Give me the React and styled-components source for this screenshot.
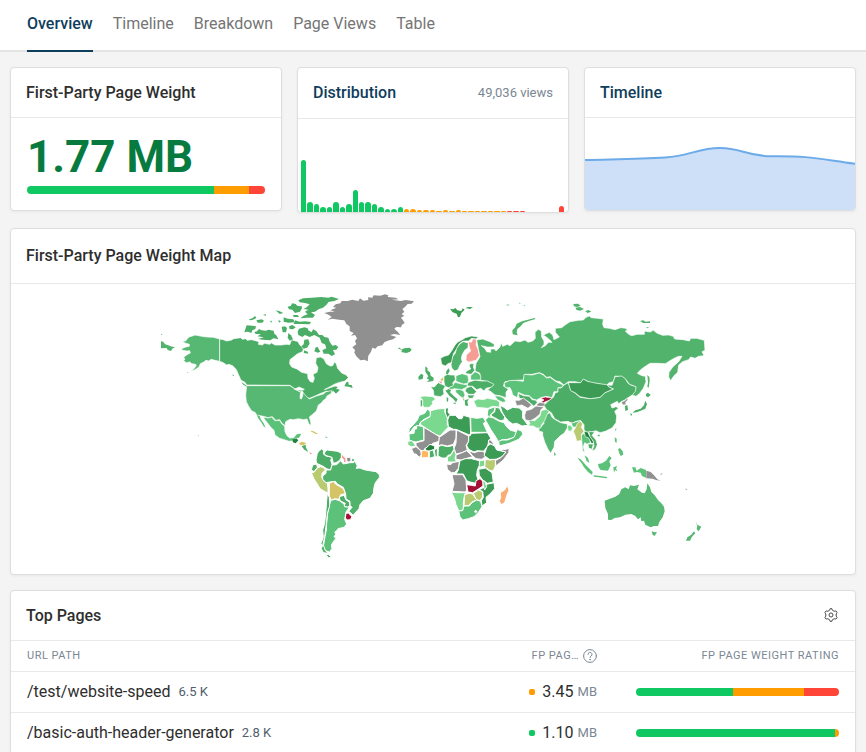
import React from "react";
import styled, { createGlobalStyle } from "styled-components";

const GlobalStyle = createGlobalStyle`
  * {
    box-sizing: border-box;
  }
  body {
    margin: 0;
    background: #f4f4f4;
    color: #2e2e2e;
    font-family: Roboto, "Liberation Sans", sans-serif;
    font-size: 16px;
  }
`;

const ratingColors = {
  good: "#10c862",
  ok: "#ff9d00",
  bad: "#ff4538",
};

const Nav = styled.nav`
  display: flex;
  gap: 20px;
  height: 52px;
  padding: 0 27px;
  background: #fff;
  border-bottom: 2px solid #e3e3e3;
`;

const Tab = styled.a`
  height: 52px;
  line-height: 48px;
  text-decoration: none;
  color: ${(props) => (props.$active ? "#0f3d5c" : "#757575")};
  font-weight: ${(props) => (props.$active ? 500 : 400)};
  border-bottom: 2px solid ${(props) => (props.$active ? "#0f3d5c" : "transparent")};
`;

const Page = styled.main`
  display: grid;
  gap: 15px;
  padding: 15px 10px;
`;

const CardRow = styled.div`
  display: grid;
  grid-template-columns: repeat(3, 1fr);
  align-items: start;
  gap: 15px;
`;

const Card = styled.section`
  overflow: hidden;
  background: #fff;
  border: 1px solid #dedede;
  border-radius: 4px;
  box-shadow: 0 1px 3px rgba(0, 0, 0, 0.05);
`;

const CardHeader = styled.header`
  display: flex;
  align-items: center;
  justify-content: space-between;
  height: ${(props) => props.$height || 50}px;
  padding: 0 15px 1px;
  border-bottom: 1px solid #e8e8e8;
`;

const CardTitle = styled.h2`
  margin: 0;
  font-size: 16px;
  font-weight: 500;
  line-height: 19px;
  color: ${(props) => (props.$link ? "#0f3d5c" : "#2e2e2e")};
`;

const Views = styled.span`
  font-size: 13px;
  color: #7b8794;
`;

const Score = styled.div`
  padding: 13px 16px 16px;
`;

const ScoreValue = styled.div`
  height: 52px;
  line-height: 52px;
  margin-bottom: 3px;
  font-size: 44px;
  font-weight: 700;
  color: #077b3f;
`;

const Bar = styled.div`
  display: flex;
  height: 8px;
  overflow: hidden;
  border-radius: 4px;
`;

const BarPart = styled.div`
  flex: ${(props) => props.$share} 0 0;
  background: ${(props) => ratingColors[props.$rating]};
`;

const Histogram = styled.div`
  display: flex;
  align-items: flex-end;
  gap: 1px;
  height: 93px;
  padding: 0 4px 0 3px;
`;

const HistogramBar = styled.div`
  flex: 1;
  background: ${(props) => ratingColors[props.$rating]};
  border-radius: 3px 3px 0 0;
`;

const Area = styled.svg`
  display: block;
  width: 100%;
  height: 92px;
`;

const MapBody = styled.div`
  padding: 1px 16px 9px;
`;

const MapSvg = styled.svg`
  display: block;
  width: 100%;
  max-width: 556px;
  margin: 0 auto;
  stroke: #fff;
  stroke-linejoin: round;
`;

const IconButton = styled.button`
  display: flex;
  padding: 0;
  margin-right: 2px;
  border: 0;
  background: none;
  color: #4a4a4a;
`;

const Table = styled.table`
  width: 100%;
  table-layout: fixed;
  border-collapse: collapse;
`;

const Th = styled.th`
  width: ${(props) => (props.$width ? props.$width + "px" : "auto")};
  height: 30px;
  padding: 0 16px;
  border-bottom: 1px solid #e8e8e8;
  font-size: 11px;
  font-weight: 400;
  letter-spacing: 0.5px;
  text-align: ${(props) => props.$align || "left"};
  white-space: nowrap;
  color: #7b8794;
`;

const ThInner = styled.div`
  display: flex;
  align-items: center;
  justify-content: flex-end;
  gap: 4px;
`;

const Td = styled.td`
  height: 41px;
  padding: ${(props) => (props.$wide ? "0 16px 0 23px" : "0 16px")};
  border-bottom: 1px solid #e8e8e8;
  white-space: nowrap;
`;

const PathCell = styled.div`
  display: flex;
  align-items: center;
  gap: 8px;
`;

const Path = styled.a`
  color: inherit;
  text-decoration: none;
`;

const Count = styled.span`
  font-size: 13px;
  color: #52606d;
`;

const Weight = styled.div`
  display: flex;
  align-items: center;
  justify-content: flex-end;
`;

const Dot = styled.span`
  flex: none;
  width: 6px;
  height: 6px;
  margin-right: 7px;
  border-radius: 2px;
  background: ${(props) => ratingColors[props.$rating]};
`;

const Unit = styled.span`
  margin-left: 4px;
  font-size: 13px;
  color: #7b8794;
`;

const tabs = ["Overview", "Timeline", "Breakdown", "Page Views", "Table"];

const histogram = [
  52, 10, 8, 5, 5, 10, 5, 8, 22, 10, 10, 8, 5, 3, 3, 5, 3, 3, 2, 2, 2, 1, 2, 1,
  2, 1, 1, 1, 1, 1, 1, 1, 1, 1, 1, 0, 0, 0, 0, 0, 6,
];

const pages = [
  { path: "/test/website-speed", count: "6.5 K", rating: "ok", weight: "3.45", split: [97, 71, 35] },
  { path: "/basic-auth-header-generator", count: "2.8 K", rating: "good", weight: "1.10", split: [199, 4, 0] },
];

const gray = "#909090";
const canada = "#4cae66";
const usa = "#56b872";
const russia = "#52b36c";
const mid = "#5cc279";
const light = "#7bd88f";
const dark = "#3c9c55";
const deep = "#23813d";
const olive = "#b8cb71";
const mustard = "#d4c465";
const crimson = "#a31234";
const pink = "#f59c94";
const orange = "#fdb75c";

// every region has its own origin, shapes are [color, points]
// border is the width of the white line between countries
const regions = [
  {
    name: "North America",
    x: 0,
    y: 0,
    border: 2,
    shapes: [
      [usa, "194,162 175,157 155,156 140,154 120,150 112,153 104,155 98,160 92,168 82,169 90,174 103,178 103,184 92,186 78,192 84,196 96,198 104,197 106,204 96,209 86,217 90,222 86,227 94,233 105,231 110,236 122,238 124,242 116,252 106,259 120,254 132,246 136,236 148,230 152,226 162,228 168,223 180,226 194,229"],
      [canada, "194,162 205,164 215,168 230,165 236,161 257,158 262,163 272,161 276,166 290,164 312,170 310,178 322,180 328,175 345,178 348,173 360,180 378,180 395,178 404,179 410,164 420,168 426,178 432,174 431,184 438,182 445,192 443,200 428,206 418,214 405,224 404,236 410,246 426,252 440,262 458,266 459,280 466,290 474,292 478,280 474,268 486,262 489,248 482,235 484,218 497,216 507,222 514,236 525,243 533,242 538,232 543,234 548,250 560,264 574,270 580,278 570,288 550,293 538,298 525,305 508,314 520,310 540,303 550,305 545,312 555,316 542,326 535,319 525,325 516,318 500,324 478,334 463,340 450,336 443,324 432,319 420,312 405,301 275,300 270,292 258,286 250,268 244,254 234,243 222,238 215,240 205,233 194,229"],
      [usa, "275,302 405,302 420,312 433,320 443,321 452,332 463,342 484,333 505,327 513,320 531,317 528,326 516,333 512,342 506,345 498,355 490,360 487,370 484,378 473,388 463,396 467,410 468,421 462,418 456,402 446,404 430,401 416,404 405,403 392,410 390,422 381,415 374,404 362,406 352,395 340,398 325,394 305,390 300,382 290,378 280,362 274,350 272,330"],
      ["#fff", "438,320 444,320 443,332 439,342 435,340 436,328"],
      ["#fff", "418,313 432,306 448,313 442,316 428,315"],
      [mid, "325,396 340,399 350,396 360,407 373,406 381,417 389,424 390,440 396,452 404,459 416,458 426,446 438,446 432,458 421,460 416,467 402,469 388,464 374,460 360,450 357,436 350,430 340,417 330,405"],
    ],
  },
  {
    name: "Pacific coast and Canadian islands",
    x: 0,
    y: 0,
    border: 0,
    shapes: [
      [russia, "18,168 26,172 30,178 40,181 47,184 60,187 52,191 48,198 38,195 35,189 18,190"],
      [russia, "18,147 23,149 18,150"],
      [usa, "96,262 100,261 98,264"],
      [usa, "130,451 133,453 130,454"],
      [mid, "305,390 314,393 318,404 326,415 332,428 326,424 318,411 311,402"],
      [canada, "232,268 238,272 234,273"],
      [canada, "258,291 272,300 277,306 265,299"],
      [canada, "275,121 292,122 303,124 301,132 292,136 289,144 279,140 268,142 272,130"],
      [canada, "298,141 306,139 312,132 320,136 333,137 340,134 356,137 358,146 364,151 370,163 355,160 346,166 324,164 309,162 326,157 307,154 318,148 302,147"],
      [canada, "282,103 292,100 300,93 304,99 292,105 285,106"],
      [canada, "304,106 320,103 327,107 322,113 308,113"],
      [canada, "324,90 332,87 333,92"],
      [canada, "344,108 350,107 350,113"],
      [canada, "362,76 374,79 385,84 374,87"],
      [canada, "398,65 408,62 411,55 422,57 427,63 441,64 440,72 434,80 420,84 412,74 402,73"],
      [canada, "370,105 378,109 372,113"],
      [canada, "386,97 398,101 415,103 419,112 400,113 386,110"],
      [canada, "380,126 390,124 396,129 393,142 383,142"],
      [canada, "402,124 412,120 422,127 414,133 404,132"],
      [canada, "400,144 408,151 414,163 404,167 398,158"],
    ],
  },
  {
    name: "Arctic and Atlantic",
    x: 420,
    y: 0,
    border: 0,
    shapes: [
      [canada, "10,46 24,40 50,38 78,36 100,38 110,35 132,42 118,48 100,51 96,58 84,68 72,72 60,80 48,82 60,90 54,98 36,98 16,100 26,92 38,88 30,80 40,74 26,72 36,66 44,58 30,54 14,52"],
      [canada, "0,60 12,64 18,72 14,82 2,80 -6,74"],
      [canada, "-6,90 8,90 12,96 -4,96"],
      [canada, "0,106 14,110 30,109 48,111 44,118 20,117 -4,117"],
      [canada, "12,131 28,127 38,130 40,136 50,142 54,133 64,138 72,150 82,150 88,156 100,158 104,170 112,182 122,180 130,186 124,194 114,195 120,208 110,213 100,206 86,206 82,196 94,190 90,178 80,174 74,158 58,150 44,156 30,150 22,156 10,150 8,140"],
      [canada, "28,164 40,163 44,176 36,188 26,191 19,184 26,178"],
      [canada, "-4,168 8,170 12,178 19,186 8,189 12,200 2,202 -6,188"],
      [canada, "62,187 68,186 76,200 68,203 58,199"],
      [canada, "28,196 38,200 40,206 26,204"],
      [canada, "148,304 154,292 160,290 161,299 170,300 173,309 160,305"],
      [canada, "118,318 128,312 134,314 124,325"],
      [gray, "88,84 104,80 120,80 106,76 124,68 114,66 122,58 136,55 140,48 158,48 172,44 190,48 195,40 205,47 220,45 219,37 232,38 236,31 256,32 270,28 280,31 278,36 302,38 310,43 290,44 318,48 332,45 357,49 350,56 338,57 330,66 322,72 328,80 320,88 328,92 318,98 324,106 329,114 321,119 318,127 304,126 298,131 308,140 316,150 298,147 285,150 304,156 294,163 278,167 268,172 262,181 248,184 241,191 232,188 228,200 220,212 218,229 208,224 196,226 184,214 178,203 180,195 172,187 184,178 180,168 186,160 180,150 168,152 176,144 164,138 164,124 154,117 148,106 132,104 112,101 98,104 110,96 102,90"],
      [canada, "308,189 315,188 318,194 328,190 344,188 350,194 345,200 334,204 318,201 322,197"],
      [mustard, "44,437 54,438 70,447 62,447"],
      [mid, "89,455 98,456 94,459"],
      [mid, "2,452 14,446 18,448 12,458 4,458"],
      [deep, "-8,464 4,460 10,466 2,475 -6,472"],
      [mustard, "12,474 22,470 34,474 26,481 16,480"],
      [canada, "20,484 32,479 33,488 40,501 28,494"],
      [pink, "42,502 48,504 52,507 46,508"],
    ],
  },
  {
    name: "South America",
    x: 435,
    y: 435,
    border: 3,
    shapes: [
      [canada, "65,57 71,62 70,72 78,78 98,82 92,90 96,103 92,120 80,116 68,108 50,100 48,90 52,70 58,62"],
      [canada, "76,64 82,60 98,62 112,64 122,68 127,78 118,92 108,98 100,100 96,82 80,77 72,72"],
      [pink, "124,72 132,79 138,86 138,98 130,98 131,90 124,82"],
      [gray, "140,82 152,82 153,94 146,96 140,92"],
      [mid, "155,84 165,88 160,96 154,94"],
      [canada, "38,105 50,102 52,112 42,125 34,120"],
      [olive, "34,128 42,127 52,114 62,110 72,114 76,120 66,130 65,142 72,154 82,160 84,174 84,189 72,183 60,176 52,162 42,147"],
      [russia, "78,120 92,120 96,105 110,104 122,92 130,102 150,98 160,98 165,94 172,108 168,115 180,114 192,119 208,122 228,125 238,134 238,143 226,158 222,172 220,190 210,205 190,212 180,224 177,236 168,246 159,256 152,248 146,244 156,232 150,226 150,214 138,207 137,192 130,172 112,162 106,154 88,156 78,158 68,148 68,138 78,130"],
      [mustard, "88,160 102,154 106,162 120,170 130,176 136,191 122,194 116,208 104,206 94,211 88,198"],
      [canada, "118,200 132,196 138,210 148,216 149,226 143,232 132,228 136,220 120,212"],
      [crimson, "138,249 146,250 156,260 151,269 142,270 136,264"],
      [mid, "93,211 106,208 118,212 132,222 134,230 148,232 138,246 134,268 140,282 132,292 114,296 110,302 104,306 108,312 102,320 108,325 100,335 94,345 96,355 89,366 76,362 70,350 75,320 79,300 80,280 83,250 88,225"],
      [canada, "82,190 88,202 89,228 82,250 79,280 74,320 69,342 76,362 86,370 70,368 64,356 68,345 62,342 70,322 68,300 74,280 78,240 80,212"],
      [canada, "77,374 86,374 92,380 98,383 86,383"],
    ],
  },
  {
    name: "Europe and Russia",
    x: 735,
    y: 0,
    border: 2,
    shapes: [
      [dark, "122,220 132,214 146,210 156,196 164,182 172,172 184,166 196,158 215,153 235,156 228,162 214,160 206,168 190,168 178,176 170,192 160,206 156,232 144,236 136,243 125,238"],
      [russia, "158,215 166,204 170,190 180,176 190,170 205,174 204,188 194,196 186,210 184,222 187,230 180,240 174,254 164,258 156,250 153,240"],
      [pink, "205,170 214,172 220,160 230,166 228,180 234,192 238,212 228,226 206,231 198,226 199,210 212,198 208,186"],
      [russia, "230,165 248,162 270,170 283,178 282,186 262,186 244,182 254,190 260,200 272,202 272,192 284,192 288,198 300,186 304,173 308,184 322,178 330,182 345,168 360,170 375,165 384,172 398,168 406,160 405,142 415,133 424,138 425,156 432,168 432,178 424,188 436,182 445,172 456,172 444,160 430,150 448,142 458,150 462,164 478,156 466,142 466,130 485,128 495,120 510,110 535,106 550,105 558,97 568,93 574,98 592,100 610,102 608,118 612,128 628,130 645,134 662,128 677,130 683,136 676,138 686,148 695,152 712,148 733,148 733,138 750,141 760,136 772,145 788,151 806,150 820,154 824,162 850,164 868,168 872,160 890,160 913,166 915,196 906,200 912,212 896,214 885,220 872,216 866,224 848,230 836,240 833,262 822,272 812,287 806,276 807,262 818,246 836,230 846,214 836,214 826,218 812,226 796,236 775,235 750,235 736,244 722,254 712,265 726,272 736,274 738,290 730,310 718,326 708,334 696,330 700,318 708,308 700,302 688,298 678,284 665,275 645,273 640,290 626,294 620,302 590,295 574,294 550,283 543,294 525,290 505,290 492,300 480,290 468,288 450,275 440,277 430,268 418,263 396,268 375,268 370,285 345,286 315,290 310,303 325,312 318,322 318,338 300,332 285,330 270,318 262,316 280,300 265,290 240,285 240,265 225,258 228,235 240,215 235,190"],
      [canada, "205,292 225,285 244,288 262,288 282,298 275,306 258,310 252,318 242,310 230,314 218,304 200,303"],
      [mid, "212,272 225,260 238,266 243,276 240,285 212,285"],
      [canada, "196,262 204,256 212,252 208,242 210,236 222,236 220,246 224,256 214,268 200,266"],
      [mid, "168,272 186,266 203,271 206,284 203,295 190,297 168,289"],
      [canada, "132,274 142,268 152,270 164,270 166,284 158,294 162,303 146,308 135,304 132,290"],
      [canada, "92,305 103,306 108,300 115,293 130,300 136,303 130,314 132,328 121,335 102,332 100,316"],
      [light, "60,336 72,333 98,335 107,342 96,350 98,356 88,367 72,367 68,360 68,345"],
      [canada, "61,344 68,346 67,365 61,364"],
      [mid, "146,308 158,303 164,292 190,298 204,300 198,308 184,314 164,311 150,314"],
      [canada, "200,308 214,304 222,312 230,320 221,328 206,328 195,318"],
      [mid, "165,315 178,313 190,317 195,330 190,340 180,334 168,322"],
      [canada, "202,330 224,330 218,340 206,340"],
      [light, "221,348 234,342 250,344 262,340 290,345 299,352 298,366 276,364 264,370 248,368 230,367"],
      [mid, "284,332 300,334 312,340 318,350 308,352 292,344"],
      [mid, "312,294 328,287 345,286 370,289 372,268 396,270 418,264 430,270 440,279 450,277 468,290 490,300 484,308 474,308 474,320 462,320 456,338 440,334 425,337 410,345 398,342 388,332 372,330 355,322 352,338 338,330 335,318 330,308 316,308"],
      [canada, "355,325 370,332 388,334 396,344 408,346 412,352 402,364 388,352 372,342 358,340"],
      [gray, "345,346 358,346 370,339 384,350 395,360 384,370 366,360 350,362"],
      [crimson, "422,340 436,336 456,339 448,346 436,350 430,354 424,350 432,345"],
      [gray, "410,358 420,352 434,355 440,364 412,364"],
    ],
  },
  {
    name: "European and Russian islands",
    x: 735,
    y: 0,
    border: 0,
    shapes: [
      [dark, "150,72 160,73 166,69 172,76 184,78 188,70 194,74 184,84 180,95 174,97 170,86 158,82"],
      [dark, "196,69 206,66 219,67 210,72"],
      [mid, "318,60 328,58 324,62"],
      [mid, "358,52 362,56 358,56"],
      [mid, "370,62 376,60 374,64"],
      [russia, "338,148 337,136 346,126 350,116 366,109 384,104 406,98 404,103 386,108 370,114 362,124 352,132 350,142 353,151"],
      [russia, "520,57 534,56 542,62 532,66 522,64"],
      [russia, "526,68 540,66 552,72 540,77 530,75"],
      [russia, "556,78 566,75 574,80 562,84"],
      [russia, "720,108 730,106 736,110 750,109 750,114 730,114"],
      [russia, "738,127 748,127 742,130"],
      [russia, "742,270 748,276 749,288 746,308 742,306 744,292"],
      [canada, "139,258 146,250 149,258 143,268 138,266"],
      [mustard, "121,284 130,276 130,285 124,288"],
      [pink, "115,289 126,290 124,296"],
      [canada, "76,244 83,250 82,256 90,262 92,272 101,278 100,288 80,291 88,284 80,280 85,274 76,260"],
      [canada, "55,276 63,266 70,270 68,282 56,284"],
      [canada, "136,317 146,312 153,316 150,322 162,334 173,343 168,352 160,342 148,332 142,324"],
      [canada, "158,353 168,353 166,358"],
      [canada, "140,336 145,340 144,351 140,348"],
      [olive, "188,340 194,342 190,348"],
      [canada, "194,346 206,342 202,350 205,362 196,362"],
    ],
  },
  {
    name: "Africa and Middle East",
    x: 735,
    y: 315,
    border: 3,
    shapes: [
      [mid, "82,58 90,63 92,78 72,88 60,98 58,106 42,110 34,122 26,130 28,116 42,102 52,90 58,76 74,70"],
      [light, "92,62 112,57 135,55 134,66 142,80 142,104 146,110 120,138 108,134 62,104 62,96 90,80"],
      [dark, "136,55 146,53 144,66 150,74 142,83 137,72"],
      [dark, "148,76 166,76 176,86 186,86 190,76 210,82 212,132 206,134 168,118 160,118 145,110 143,90"],
      [mid, "212,82 230,85 250,82 257,96 250,100 262,127 213,127"],
      [mid, "27,132 42,130 44,118 50,116 50,106 70,110 72,150 48,156 28,152"],
      [gray, "72,112 118,140 117,154 98,160 88,170 76,174 70,183 60,180 48,166 48,158 72,152"],
      [gray, "118,142 150,120 168,120 168,144 160,163 142,168 124,164 115,168"],
      [gray, "170,120 206,138 205,156 198,166 202,180 186,188 168,192 162,176 168,160"],
      [dark, "213,130 262,128 272,144 266,156 262,170 250,184 232,182 222,186 206,178 200,166 206,154 206,138 212,136"],
      [gray, "266,150 272,150 284,164 274,162 265,158"],
      [light, "23,154 36,152 48,168 34,170 24,166"],
      [gray, "34,176 48,170 62,182 64,194 58,202 48,192 42,192"],
      [orange, "64,184 72,181 86,184 86,202 64,204"],
      [deep, "76,176 90,163 104,168 104,178 88,183 78,182"],
      [canada, "88,183 100,180 104,200 88,205"],
      [canada, "103,180 112,174 112,200 106,201"],
      [canada, "115,170 124,166 144,170 160,166 162,178 152,194 144,196 138,204 126,204 114,198"],
      [light, "142,202 152,196 163,178 168,194 165,206 170,216 143,216"],
      [gray, "168,195 186,188 200,182 218,200 196,206 184,210 168,208"],
      [gray, "206,182 222,188 236,184 250,184 258,198 246,208 228,206 216,196"],
      [dark, "262,168 272,162 284,168 290,180 318,186 306,200 288,208 268,208 252,196"],
      [gray, "290,178 312,179 328,175 326,188 310,210 288,228 286,212 304,202 318,186"],
      [olive, "256,208 270,210 286,208 286,228 280,242 270,242 254,230"],
      [light, "240,212 254,210 254,228 238,232 236,224"],
      [gray, "140,222 152,224 158,218 178,214 176,234 164,248 154,248 142,238"],
      [dark, "180,212 196,206 214,206 238,212 238,226 232,240 230,256 234,268 228,280 210,276 200,272 190,252 168,252 174,242"],
      [gray, "156,254 188,254 198,270 200,300 196,306 156,304 162,282"],
      [crimson, "200,284 214,286 226,288 228,272 240,266 249,274 249,288 234,298 218,308 204,306"],
      [dark, "236,238 256,234 276,248 280,276 262,280 248,270 238,256"],
      [dark, "254,284 282,278 284,296 270,312 258,322 260,338 246,348 244,332 250,322 248,304 236,300 256,290"],
      [light, "248,272 255,274 260,290 254,300 250,288"],
      [olive, "220,310 236,300 248,306 247,322 240,332 228,328"],
      [olive, "194,314 208,310 218,312 230,330 216,336 206,346 192,348"],
      [light, "154,306 170,308 212,308 194,312 190,336 190,360 176,362 168,344 164,328"],
      [mid, "176,363 188,362 192,348 208,348 216,338 230,330 242,334 246,350 236,366 222,380 205,386 188,390 180,380"],
      ["#fff", "224,363 228,361 231,365 226,368"],
      ["#f9ad72", "322,286 327,300 320,318 314,338 304,344 298,334 302,322 301,308 314,300"],
      [mid, "256,90 266,80 280,84 298,94 312,98 318,108 330,120 350,126 344,142 322,148 304,150 296,156 284,136 272,118 262,100"],
      [mid, "296,154 306,150 322,150 342,142 352,118 366,124 368,134 356,148 328,160 298,168"],
      [mid, "264,58 286,50 282,64 270,76 278,82 266,80 262,74"],
      [canada, "286,52 298,54 304,66 314,80 312,90 300,92 278,80 272,74 284,66"],
      [canada, "300,46 312,52 322,60 338,52 358,54 368,64 368,84 384,106 366,108 350,100 338,102 326,94 316,82 306,66"],
    ],
  },
  {
    name: "Asia",
    x: 1095,
    y: 315,
    border: 2,
    shapes: [
      [canada, "100,22 106,8 114,6 114,-6 124,-6 132,-15 145,-22 152,0 166,10 180,22 210,26 240,22 255,8 280,-3 268,-8 262,-15 276,-14 280,-25 285,-40 305,-42 316,-34 324,-20 334,-14 348,-10 346,4 338,14 326,22 314,30 302,36 296,42 292,34 272,44 276,54 288,50 296,54 284,64 290,78 288,98 276,114 256,124 240,128 228,122 214,126 202,128 192,120 192,104 182,92 168,94 156,100 144,94 122,96 104,86 94,68 80,60 72,46 84,34"],
      [dark, "145,-22 182,-22 190,-33 202,-26 230,-20 260,-16 268,-8 280,-3 255,8 240,22 210,26 180,20 165,8 152,2"],
      [gray, "304,36 314,32 322,24 324,30 317,36 318,44 308,45"],
      [usa, "62,112 72,100 70,90 80,72 90,68 96,82 104,88 122,98 142,102 142,114 132,130 120,138 104,154 102,172 92,190 84,178 74,156 68,136 68,126 58,124 56,116"],
      [light, "142,106 152,106 158,114 154,124 144,122"],
      [mid, "154,100 168,95 182,92 176,102 166,112 158,110"],
      [orange, "146,98 154,97 153,102"],
      [light, "24,90 44,92 60,78 64,62 78,58 88,64 80,76 74,92 64,106 62,114 50,114 40,108 26,108 30,100"],
      [gray, "14,76 18,62 34,58 48,48 62,50 72,50 62,60 60,72 46,84 32,92 16,90"],
      [olive, "160,124 166,114 172,100 182,94 188,102 184,112 192,124 184,134 186,152 178,152 170,154 166,138"],
      [mid, "184,136 192,130 202,140 212,148 210,160 200,162 194,158 190,170 194,188 188,182 186,160"],
      [deep, "192,124 204,126 208,136 218,150 222,160 214,160 206,144 196,140"],
      [canada, "206,124 224,126 216,136 228,150 232,164 226,178 216,184 222,168 220,154 210,140"],
      [canada, "204,162 220,162 216,178 206,174"],
    ],
  },
  {
    name: "Asian islands and Oceania",
    x: 1095,
    y: 315,
    border: 0,
    shapes: [
      [canada, "315,48 322,45 324,60 316,63"],
      [canada, "378,12 384,8 392,15 384,22 378,18"],
      [canada, "376,32 381,42 376,56 362,62 350,67 338,68 346,61 362,56 372,46"],
      [canada, "331,70 337,72 333,79"],
      [canada, "288,113 289,120 285,122"],
      [canada, "232,135 240,134 237,140"],
      [canada, "102,186 108,194 103,197"],
      [mid, "194,196 204,204 208,218 200,214"],
      [mid, "172,203 182,208 198,226 210,238 218,246 216,254 204,246 192,232 184,218"],
      [mid, "220,256 236,257 262,261 260,265 236,262 222,260"],
      [mid, "234,222 246,220 258,212 268,198 275,204 268,214 272,226 264,242 242,240 236,232"],
      [mid, "280,232 292,228 288,235 292,244 285,240 282,248"],
      [mid, "284,142 290,146 290,158 285,156"],
      [mid, "294,178 300,174 308,184 310,194 302,198 298,190"],
      [mid, "336,232 346,232 350,242 362,234 378,240 379,264 366,258 362,248 350,246 342,248"],
      [gray, "379,242 392,246 402,256 412,268 422,272 408,270 398,266 379,265"],
      [gray, "420,252 428,250 424,254"],
      [gray, "496,294 502,300 498,300"],
      [usa, "254,332 270,326 286,320 298,312 304,298 316,292 326,298 330,286 342,288 357,284 352,298 366,308 374,310 380,298 382,280 390,292 394,306 404,316 414,330 424,340 432,350 434,364 428,382 418,396 414,408 402,408 392,412 376,404 372,392 364,394 362,382 354,388 346,378 334,372 316,374 300,382 284,384 274,390 264,389 264,372 256,354"],
      [usa, "395,424 404,427 411,426 404,438 398,434"],
      [usa, "526,392 532,404 544,410 536,424 530,418 532,408"],
      [usa, "522,424 526,430 516,440 510,452 498,452 502,442 514,434"],
    ],
  },
];

const WorldMap = () => (
  <MapSvg viewBox="0 0 1668 840" role="img" aria-label="World map">
    {regions.map((region) => (
      <g
        key={region.name}
        transform={`translate(${region.x} ${region.y})`}
        strokeWidth={region.border}
      >
        {region.shapes.map(([color, points]) => (
          <polygon key={points} points={points} fill={color} />
        ))}
      </g>
    ))}
  </MapSvg>
);

const GearIcon = () => (
  <svg width="14" height="14" viewBox="0 0 14 14" fill="none" stroke="currentColor" strokeLinejoin="round">
    <path d="M5.700 2.200 6.200.6h1.600l.5 1.600 1.900 1.100 1.700-.4 1.200 1.600-.9 1.400v2.200l.9 1.400-1.200 1.600-1.700-.4-1.900 1.100-.5 1.600H6.200l-.5-1.600-1.900-1.100-1.700.4L.9 9.500l.9-1.400V5.900L.9 4.500l1.200-1.600 1.700.4z" />
    <circle cx="7" cy="7" r="2" />
  </svg>
);

const HelpIcon = () => (
  <svg width="14" height="14" viewBox="0 0 14 14" fill="none" stroke="currentColor" strokeLinecap="round">
    <circle cx="7" cy="7" r="6.400" />
    <path d="M5 5.400a2 2 0 1 1 3 1.700c-.7.400-1 .7-1 1.400" />
    <circle cx="7" cy="10.400" r=".3" />
  </svg>
);

const RatingBar = ({ split }) => (
  <Bar>
    <BarPart $rating="good" $share={split[0]} />
    <BarPart $rating="ok" $share={split[1]} />
    <BarPart $rating="bad" $share={split[2]} />
  </Bar>
);

const barRating = (index) => {
  if (index < 16) return "good";
  return index < 32 ? "ok" : "bad";
};

const App = () => {
  return (
    <>
      <GlobalStyle />
      <Nav>
        {tabs.map((tab, index) => (
          <Tab key={tab} href="#" $active={index === 0}>
            {tab}
          </Tab>
        ))}
      </Nav>
      <Page>
        <CardRow>
          <Card>
            <CardHeader>
              <CardTitle>First-Party Page Weight</CardTitle>
            </CardHeader>
            <Score>
              <ScoreValue>1.77 MB</ScoreValue>
              <RatingBar split={[187, 35, 16]} />
            </Score>
          </Card>
          <Card>
            <CardHeader $height={51}>
              <CardTitle $link>Distribution</CardTitle>
              <Views>49,036 views</Views>
            </CardHeader>
            <Histogram>
              {histogram.map((height, index) => (
                <HistogramBar key={index} $rating={barRating(index)} style={{ height }} />
              ))}
            </Histogram>
          </Card>
          <Card>
            <CardHeader>
              <CardTitle $link>Timeline</CardTitle>
            </CardHeader>
            <Area viewBox="0 0 270 92" preserveAspectRatio="none">
              <path
                d="M-2 42C40 41 55 41 80 39.500C105 38 113 30 135 30C157 30 160 38 187 38.300C225 38 228 40 272 46V94H-2z"
                fill="#cde0f8"
                stroke="#6daae8"
                strokeWidth="2"
              />
            </Area>
          </Card>
        </CardRow>
        <Card>
          <CardHeader $height={55}>
            <CardTitle>First-Party Page Weight Map</CardTitle>
          </CardHeader>
          <MapBody>
            <WorldMap />
          </MapBody>
        </Card>
        <Card>
          <CardHeader>
            <CardTitle>Top Pages</CardTitle>
            <IconButton aria-label="Settings">
              <GearIcon />
            </IconButton>
          </CardHeader>
          <Table>
            <thead>
              <tr>
                <Th>URL PATH</Th>
                <Th $width={98}>
                  <ThInner>
                    FP PAG…
                    <HelpIcon />
                  </ThInner>
                </Th>
                <Th $width={242} $align="right">
                  FP PAGE WEIGHT RATING
                </Th>
              </tr>
            </thead>
            <tbody>
              {pages.map((page) => (
                <tr key={page.path}>
                  <Td>
                    <PathCell>
                      <Path href="#">{page.path}</Path>
                      <Count>{page.count}</Count>
                    </PathCell>
                  </Td>
                  <Td>
                    <Weight>
                      <Dot $rating={page.rating} />
                      {page.weight}
                      <Unit>MB</Unit>
                    </Weight>
                  </Td>
                  <Td $wide>
                    <RatingBar split={page.split} />
                  </Td>
                </tr>
              ))}
            </tbody>
          </Table>
        </Card>
      </Page>
    </>
  );
};

export default App;
